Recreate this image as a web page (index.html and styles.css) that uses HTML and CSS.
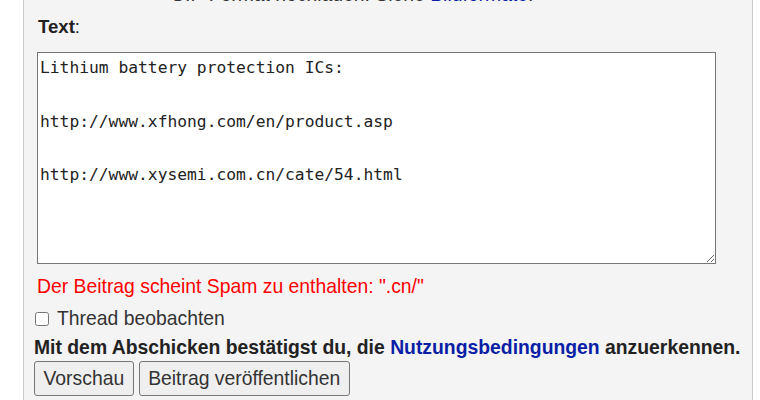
FILE: index.html
```html
<!DOCTYPE html>
<html lang="de">
<head>
    <meta charset="UTF-8">
    <meta name="viewport" content="width=device-width, initial-scale=1.0">
    <title>Beitrag schreiben</title>
    <link rel="stylesheet" href="styles.css">
</head>
<body>
    <div class="panel">
        <form action="/post" method="POST" class="post_form">
            <div class="hint">GIF-Format hochladen. Siehe <a href="#">Bildformate</a>.</div>
            <label for="post_text" class="text_label"><b>Text</b>:</label>
            <textarea id="post_text" name="post_text" class="post_text">Lithium battery protection ICs:

http://www.xfhong.com/en/product.asp

http://www.xysemi.com.cn/cate/54.html</textarea>
            <div class="error">Der Beitrag scheint Spam zu enthalten: ".cn/"</div>
            <div class="watch">
                <input type="checkbox" id="watch_thread" name="watch_thread">
                <label for="watch_thread">Thread beobachten</label>
            </div>
            <div class="terms">Mit dem Abschicken bestätigst du, die <a href="#">Nutzungsbedingungen</a> anzuerkennen.</div>
            <div class="buttons">
                <button type="submit" name="preview">Vorschau</button>
                <button type="submit" name="submit">Beitrag veröffentlichen</button>
            </div>
        </form>
    </div>
</body>
</html>
```

FILE: styles.css
```css
body {
    font-family: "Liberation Sans", Arial, sans-serif;
    font-size: 19.35px;
    color: #333;
    background-color: #fff;
    margin: 0;
    padding: 0;
    overflow: hidden;
}

a {
    color: #0a1ea6;
    text-decoration: none;
}

.panel {
    margin-left: 23px;
    width: 730px;
    min-height: 420px;
    margin-top: -17px;
    background-color: #f4f4f4;
    border-left: 1px solid #ccc;
    border-right: 1px solid #ccc;
    padding: 0 10px;
    box-sizing: border-box;
}

.hint {
    padding-left: 136px;
    margin-bottom: 10px;
}

.text_label {
    display: block;
    margin-left: 4px;
    font-size: 18.6px;
    line-height: 22px;
    color: #222;
    margin-bottom: 14px;
}

.text_label b {
    font-weight: bold;
}

.post_text {
    display: block;
    margin-left: 3px;
    width: 679px;
    height: 212px;
    box-sizing: border-box;
    border: 1px solid #767676;
    padding: 2px;
    font-family: "DejaVu Sans Mono", "Liberation Mono", monospace;
    font-size: 16.3px;
    line-height: 26.8px;
    color: #222;
    background-color: #fff;
    resize: both;
}

.error {
    margin-left: 3px;
    margin-top: 11px;
    color: #ff0000;
}

.watch {
    display: flex;
    align-items: center;
    margin-top: 9px;
}

.watch input {
    width: 14px;
    height: 14px;
    margin: 0 8px 0 1px;
}

.terms {
    margin-top: 6px;
    font-weight: bold;
    color: #222;
}

.buttons {
    margin-top: 2px;
    display: flex;
    gap: 5px;
}

button {
    font-family: "Liberation Sans", Arial, sans-serif;
    font-size: 19.35px;
    color: #333;
    background-color: #efefef;
    border: 1px solid #767676;
    border-radius: 3px;
    padding: 5px 8.5px;
    cursor: pointer;
}

button:hover {
    background-color: #e5e5e5;
}
```
